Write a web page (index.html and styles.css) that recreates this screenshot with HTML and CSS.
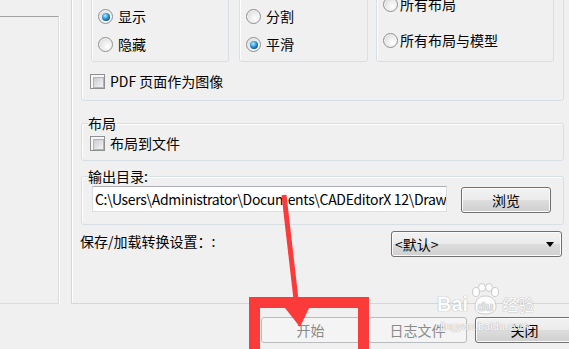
FILE: index.html
```html
<!DOCTYPE html>
<html lang="zh-CN">
<head>
    <meta charset="UTF-8">
    <meta name="viewport" content="width=device-width, initial-scale=1.0">
    <title>导出 PDF</title>
    <link rel="stylesheet" href="styles.css">
</head>
<body>

<div class="window">
    <div class="main">
        <div class="side-panel"></div>

        <div class="tab-page">
            <fieldset class="group options">
                <div class="radio-row">
                    <div class="group radio-box box-1">
                        <div class="option"><span class="radio checked"></span><span>显示</span></div>
                        <div class="option"><span class="radio"></span><span>隐藏</span></div>
                    </div>
                    <div class="group radio-box box-2">
                        <div class="option"><span class="radio"></span><span>分割</span></div>
                        <div class="option"><span class="radio checked"></span><span>平滑</span></div>
                    </div>
                    <div class="group radio-box box-3">
                        <div class="option"><span class="radio"></span><span>所有布局</span></div>
                        <div class="option"><span class="radio"></span><span>所有布局与模型</span></div>
                    </div>
                </div>
                <div class="check-row pdf-row"><span class="checkbox"></span><span>PDF 页面作为图像</span></div>
            </fieldset>

            <fieldset class="group layout-group">
                <legend>布局</legend>
                <div class="check-row"><span class="checkbox"></span><span>布局到文件</span></div>
            </fieldset>

            <fieldset class="group output-group">
                <legend>输出目录:</legend>
                <div class="path-row">
                    <div class="path-input">C:\Users\Administrator\Documents\CADEditorX 12\Draw</div>
                    <button class="btn browse">浏览</button>
                </div>
            </fieldset>

            <div class="settings-row">
                <span class="settings-label">保存/加载转换设置：:</span>
                <div class="combo"><span>&lt;默认&gt;</span><span class="combo-arrow"></span></div>
            </div>
        </div>
    </div>

    <div class="button-row">
        <button class="btn" disabled>开始</button>
        <button class="btn" disabled>日志文件</button>
        <button class="btn">关闭</button>
    </div>
</div>

<!-- watermark from the screenshot source -->
<div class="watermark">
    <div class="wm-logo">
        <span>Bai</span>
        <svg class="wm-paw" width="32" height="32" viewBox="0 0 32 32">
            <g fill="#fff" stroke="#c8c8c8" stroke-width="1">
                <ellipse cx="7" cy="9" rx="3.5" ry="4.5"/>
                <ellipse cx="13" cy="4.5" rx="3.5" ry="4"/>
                <ellipse cx="20" cy="4.5" rx="3.5" ry="4"/>
                <ellipse cx="26" cy="9" rx="3.5" ry="4.5"/>
                <path d="M6 24 C6 16 11 13 16 13 C22 13 27 16 27 24 C27 29 22 31 16 31 C10 31 6 29 6 24 Z"/>
            </g>
            <text x="16.5" y="28" text-anchor="middle" font-family="Liberation Sans, sans-serif" font-size="13" font-weight="bold" fill="#e6e6e6">du</text>
        </svg>
        <span class="wm-cn">经验</span>
    </div>
    <div class="wm-url">jingyan.baidu.com</div>
</div>

<!-- red marks drawn over the dialog -->
<svg class="marks" width="569" height="349" viewBox="0 0 569 349">
    <rect x="254.5" y="302.5" width="109" height="62" fill="none" stroke="#fb3a3a" stroke-width="11"/>
    <line x1="284" y1="195" x2="297" y2="308" stroke="#fb3a3a" stroke-width="5"/>
    <polygon points="285,308 311,304 300,327" fill="#fb3a3a"/>
</svg>

</body>
</html>
```

FILE: styles.css
```css
* {box-sizing: border-box; margin: 0; padding: 0;}

body {
    width: 569px;
    height: 349px;
    overflow: hidden;
    position: relative;
    background: #f0f0f0;
    font-family: "Noto Sans CJK SC", "Liberation Sans", sans-serif;
    font-size: 14px;
    color: #000;
}

.window {
    width: 574px;
}

.main {
    display: flex;
    align-items: flex-start;
    gap: 12px;
    height: 304px;
}

.side-panel {
    width: 59px;
    height: 288px;
    margin-top: 16px;
    border-top: 1px solid #a3a3a3;
    border-right: 1px solid #dcdcdc;
    border-bottom: 1px solid #dcdcdc;
    box-shadow: 1px 0 0 #fff;
}

.tab-page {
    width: 503px;
    height: 364px;
    margin-top: -60px;
    padding: 10px 9px 0;
    border: 1px solid #d6d6d6;
    box-shadow: inset 1px 0 0 #fff;
}

.group {
    border: 1px solid #d5dfe5;
    border-radius: 3px;
    box-shadow: inset 1px 1px 0 #fff;
}

legend {
    line-height: 17px;
    padding-right: 1px;
}

/* options box */
.options {
    padding: 10px 9px 11px;
}

.radio-row {
    display: flex;
    height: 100px;
}

.radio-box {
    display: flex;
    flex-direction: column;
    justify-content: flex-end;
    padding-left: 6px;
}

.box-1 {
    width: 138px;
    gap: 7px;
    padding-bottom: 6px;
}

.box-2 {
    width: 129px;
    margin-left: 10px;
    gap: 7px;
    padding-bottom: 6px;
}

.box-3 {
    width: 178px;
    margin-left: 8px;
    gap: 15px;
    padding-bottom: 10px;
}

.option {
    display: flex;
    align-items: center;
    gap: 5px;
    height: 21px;
    line-height: 21px;
}

.box-3 .option {
    gap: 2px;
}

.radio {
    width: 15px;
    height: 15px;
    flex-shrink: 0;
    border-radius: 50%;
    border: 1px solid #8d8f91;
    background: radial-gradient(circle at 65% 65%, #ffffff 0%, #ececec 45%, #c9c9c9 100%);
    box-shadow: inset 0 0 0 1px #f6f6f6;
    display: flex;
    align-items: center;
    justify-content: center;
}

.radio.checked::after {
    content: "";
    width: 8px;
    height: 8px;
    border-radius: 50%;
    background: radial-gradient(circle at 40% 35%, #c4ecff 0%, #3ea7e6 35%, #115e9a 70%, #0b3050 100%);
}

.check-row {
    display: flex;
    align-items: center;
    gap: 5px;
    height: 15px;
    line-height: 15px;
}

.pdf-row {
    margin-top: 12px;
    margin-left: -1px;
}

.checkbox {
    width: 15px;
    height: 15px;
    flex-shrink: 0;
    border: 1px solid #8e8f8f;
    padding: 2px;
    background: #f7f7f7;
}

.checkbox::after {
    content: "";
    display: block;
    width: 100%;
    height: 100%;
    border: 1px solid #aeb3b9;
    background: linear-gradient(135deg, #c9ccd1, #f4f4f4);
}

/* layout box */
.layout-group {
    margin-top: 14px;
    padding: 4px 6px 9px;
}

.layout-group .check-row {
    margin-left: 2px;
}

/* output folder */
.output-group {
    margin-top: 7px;
    padding: 1px 6px 11px;
}

.path-row {
    display: flex;
    align-items: flex-start;
}

.path-input {
    width: 355px;
    height: 26px;
    margin-left: 4px;
    padding-left: 2px;
    background: #fff;
    border: 1px solid #d9dee3;
    border-top-color: #abadb3;
    line-height: 24px;
    letter-spacing: -0.32px;
    white-space: nowrap;
    overflow: hidden;
}

.btn {
    height: 26px;
    font-family: inherit;
    font-size: 14px;
    color: #000;
    border: 1px solid #707070;
    border-radius: 3px;
    background: linear-gradient(#f2f2f2 0%, #ebebeb 50%, #dddddd 51%, #cfcfcf 100%);
    box-shadow: inset 0 0 0 1px #fbfbfb;
}

.btn:disabled {
    color: #8a8a8a;
    border-color: #b8bcbf;
    background: #f4f4f4;
    box-shadow: none;
}

.browse {
    width: 90px;
    margin-top: 1px;
    margin-left: 14px;
}

/* settings */
.settings-row {
    display: flex;
    align-items: flex-start;
    justify-content: space-between;
    margin-top: 6px;
}

.settings-label {
    margin-left: -1px;
    line-height: 20px;
}

.combo {
    width: 171px;
    height: 26px;
    margin-right: 2px;
    padding: 0 7px 0 3px;
    display: flex;
    align-items: center;
    justify-content: space-between;
    border: 1px solid #707070;
    border-radius: 3px;
    background: linear-gradient(#f2f2f2 0%, #ebebeb 50%, #dddddd 51%, #cfcfcf 100%);
    box-shadow: inset 0 0 0 1px #fbfbfb;
}

.combo-arrow {
    width: 0;
    height: 0;
    border-left: 4px solid transparent;
    border-right: 4px solid transparent;
    border-top: 5px solid #000;
}

/* bottom buttons */
.button-row {
    display: flex;
    justify-content: flex-end;
    gap: 8px;
    margin-top: 13px;
}

.button-row .btn {
    width: 99px;
}

/* overlays */
.watermark {
    position: absolute;
    left: 437px;
    top: 283px;
    color: #fff;
    text-shadow: 0 0 1px #a8a8a8, 0 0 1px #a8a8a8;
    opacity: 0.9;
    pointer-events: none;
}

.wm-logo {
    display: flex;
    align-items: flex-end;
    font-family: "Liberation Sans", sans-serif;
    font-size: 20px;
    font-weight: bold;
    line-height: 22px;
}

.wm-paw {
    margin: 0 1px 0 1px;
}

.wm-cn {
    font-family: "Noto Sans CJK SC", sans-serif;
    font-size: 16px;
    font-weight: normal;
}

.wm-url {
    font-family: "Liberation Sans", sans-serif;
    font-size: 11px;
    line-height: 14px;
    margin-top: 4px;
    margin-left: 3px;
}

.marks {
    position: absolute;
    left: 0;
    top: 0;
    pointer-events: none;
}
```
